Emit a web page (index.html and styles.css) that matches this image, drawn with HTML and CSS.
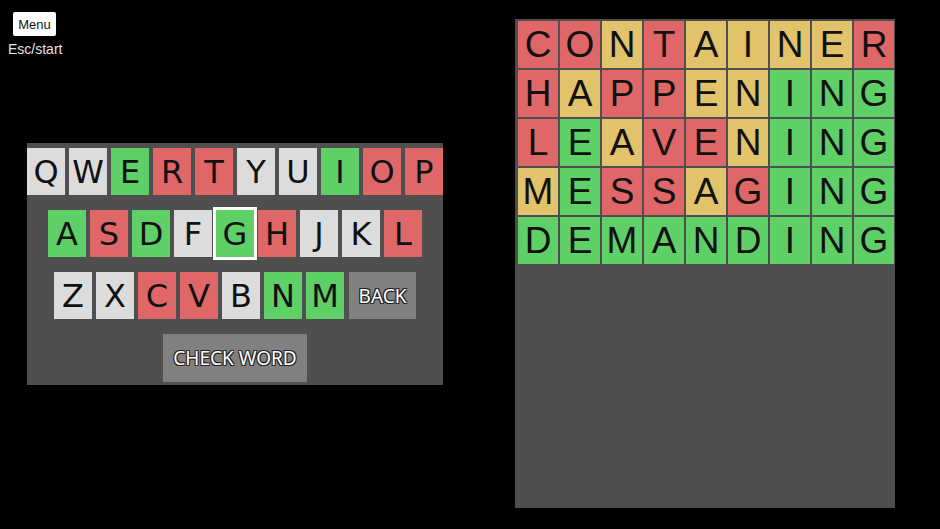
FILE: index.html
```html
<!DOCTYPE html>
<html>
<head>
<meta charset="utf-8">
<link rel="stylesheet" href="styles.css">
</head>
<body>
<div class="left">
  <div class="menu-area">
    <button class="menu-btn">Menu</button>
    <div class="hint">Esc/start</div>
  </div>
  <div class="keyboard">
    <div class="krow">
      <div class="key light">Q</div><div class="key light">W</div><div class="key green">E</div><div class="key red">R</div><div class="key red">T</div><div class="key light">Y</div><div class="key light">U</div><div class="key green">I</div><div class="key red">O</div><div class="key red">P</div>
    </div>
    <div class="krow">
      <div class="key green">A</div><div class="key red">S</div><div class="key green">D</div><div class="key light">F</div><div class="key green selected">G</div><div class="key red">H</div><div class="key light">J</div><div class="key light">K</div><div class="key red">L</div>
    </div>
    <div class="krow">
      <div class="key light">Z</div><div class="key light">X</div><div class="key red">C</div><div class="key red">V</div><div class="key light">B</div><div class="key green">N</div><div class="key green">M</div><div class="key action back">BACK</div>
    </div>
    <div class="krow">
      <div class="key action check">CHECK WORD</div>
    </div>
  </div>
</div>
<div class="board">
  <div class="grid">
    <div class="cell red">C</div><div class="cell red">O</div><div class="cell yellow">N</div><div class="cell red">T</div><div class="cell yellow">A</div><div class="cell yellow">I</div><div class="cell yellow">N</div><div class="cell yellow">E</div><div class="cell red">R</div>
    <div class="cell red">H</div><div class="cell yellow">A</div><div class="cell red">P</div><div class="cell red">P</div><div class="cell yellow">E</div><div class="cell yellow">N</div><div class="cell green">I</div><div class="cell green">N</div><div class="cell green">G</div>
    <div class="cell red">L</div><div class="cell green">E</div><div class="cell yellow">A</div><div class="cell red">V</div><div class="cell red">E</div><div class="cell yellow">N</div><div class="cell green">I</div><div class="cell green">N</div><div class="cell green">G</div>
    <div class="cell yellow">M</div><div class="cell green">E</div><div class="cell red">S</div><div class="cell red">S</div><div class="cell yellow">A</div><div class="cell red">G</div><div class="cell green">I</div><div class="cell green">N</div><div class="cell green">G</div>
    <div class="cell green">D</div><div class="cell green">E</div><div class="cell green">M</div><div class="cell green">A</div><div class="cell green">N</div><div class="cell green">D</div><div class="cell green">I</div><div class="cell green">N</div><div class="cell green">G</div>
  </div>
</div>
</body>
</html>
```
FILE: styles.css
```css
html, body {
  margin: 0;
  padding: 0;
  background: #000;
  width: 940px;
  height: 529px;
  overflow: hidden;
}
body {
  display: flex;
  font-family: "Liberation Sans", Arial, sans-serif;
}
.left {
  width: 515px;
  flex: none;
}
.menu-area {
  padding: 12px 0 0 8px;
  display: flex;
  flex-direction: column;
  align-items: flex-start;
}
.menu-btn {
  margin-left: 5px;
  width: 43px;
  height: 24px;
  padding: 0;
  border: none;
  border-radius: 2px;
  background: #fff;
  color: #111;
  font-family: "Liberation Sans", Arial, sans-serif;
  font-size: 13px;
}
.hint {
  margin-top: 5px;
  color: #e2e2e2;
  font-size: 14px;
  line-height: 16px;
}
.keyboard {
  margin: 86px 0 0 27px;
  width: 416px;
  background: #4f4f4f;
  padding: 5px 0 3px;
  display: flex;
  flex-direction: column;
  gap: 15px;
}
.krow {
  display: flex;
  justify-content: center;
  gap: 4px;
}
.key {
  width: 38px;
  height: 47px;
  display: flex;
  align-items: center;
  justify-content: center;
  font-family: "DejaVu Sans", "Noto Sans", sans-serif;
  font-size: 32px;
  color: #111;
}
.key.selected {
  outline: 3px solid #fff;
}
.light { background: #dcdcdc; }
.green { background: #5fd068; }
.red { background: #e06767; }
.yellow { background: #e3c26c; }
.key.action {
  background: #808080;
  color: #fff;
  font-family: "Noto Sans", "DejaVu Sans", sans-serif;
  font-size: 19px;
  text-shadow: -1px -1px 0 #222, 1px -1px 0 #222, -1px 1px 0 #222, 1px 1px 0 #222;
}
.key.back {
  width: 67px;
  margin-left: 1px;
}
.key.check {
  width: 144px;
  height: 48px;
}
.board {
  margin-top: 19px;
  width: 380px;
  height: 489px;
  background: #4e4e4e;
  box-sizing: border-box;
  padding: 2px 0 0 3px;
}
.grid {
  display: grid;
  grid-template-columns: repeat(9, 40px);
  grid-auto-rows: 47px;
  gap: 2px;
}
.cell {
  display: flex;
  align-items: center;
  justify-content: center;
  font-family: "Liberation Sans", Arial, sans-serif;
  font-size: 37px;
  color: #111;
}
```
